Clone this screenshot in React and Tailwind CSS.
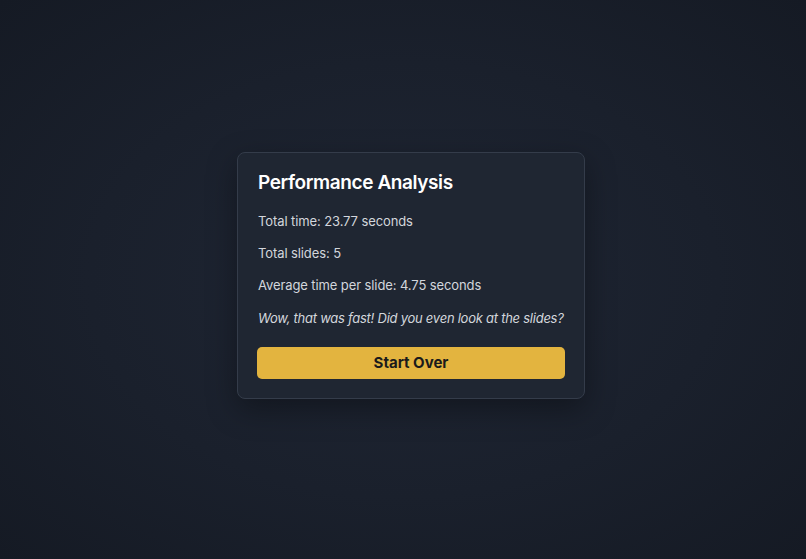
export default function App() {
  return (
    <div
      className="w-full h-[559px] flex items-center justify-center bg-[radial-gradient(ellipse_at_center,#1f2634_0%,#1a202c_55%,#151a24_100%)]"
      style={{ fontFamily: "Inter, 'Noto Sans', sans-serif" }}
    >
      <div className="w-[348px] ml-[16px] -mt-[8px] rounded-lg border border-[#343c4a] bg-[#1f2632] px-[19px] pt-[16px] pb-[19px] shadow-[0_10px_30px_rgba(0,0,0,0.35)]">
        <div className="pl-px">
          <h2 className="text-[19px] leading-[28px] font-semibold text-white tracking-[-0.4px] mb-[14px]">
            Performance Analysis
          </h2>
          <p className="text-[13px] leading-[20px] tracking-[-0.1px] text-[#d3d6dc] mb-[12px]">Total time: 23.77 seconds</p>
          <p className="text-[13px] leading-[20px] tracking-[-0.1px] text-[#d3d6dc] mb-[12px]">Total slides: 5</p>
          <p className="text-[13px] leading-[20px] tracking-[-0.1px] text-[#d3d6dc] mb-[13px]">Average time per slide: 4.75 seconds</p>
          <p className="text-[13px] leading-[20px] tracking-[-0.25px] text-[#d3d6dc] italic mb-[19px] whitespace-nowrap">
            Wow, that was fast! Did you even look at the slides?
          </p>
        </div>
        <button className="w-full h-[32px] rounded-[5px] bg-[#e3b43f] text-[#1b1b1b] text-[15px] font-bold">
          Start Over
        </button>
      </div>
    </div>
  );
}
